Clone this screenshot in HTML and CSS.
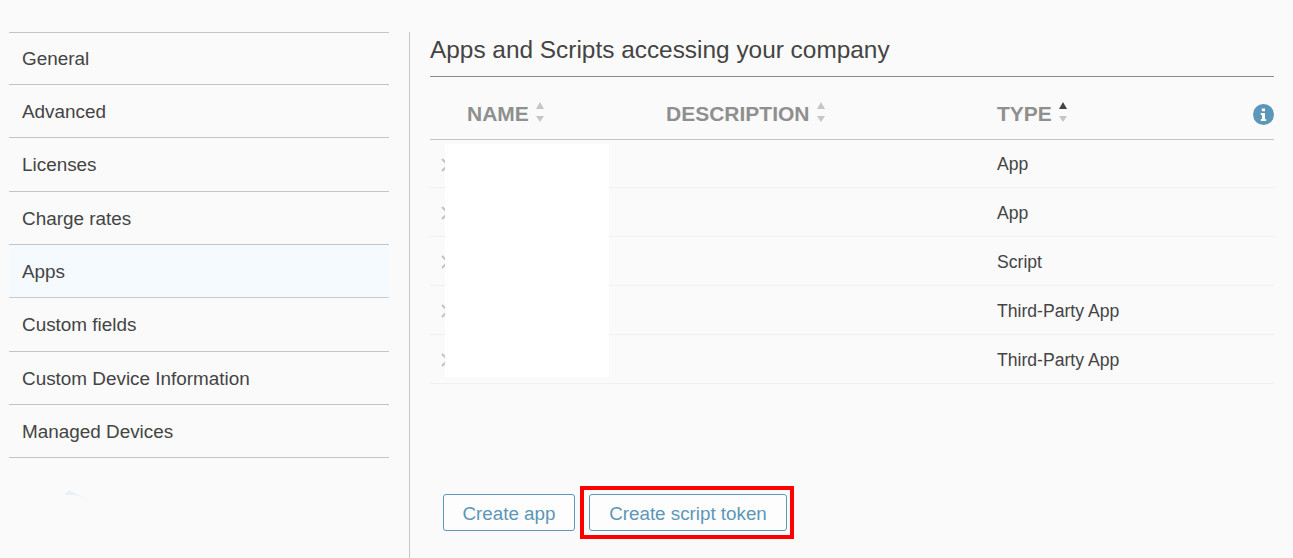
FILE: index.html
```html
<!DOCTYPE html>
<html lang="en">
<head>
<meta charset="utf-8">
<title>Apps</title>
<link rel="stylesheet" href="styles.css">
</head>
<body>
<div class="layout">
  <nav class="side">
    <a class="side-item">General</a>
    <a class="side-item">Advanced</a>
    <a class="side-item">Licenses</a>
    <a class="side-item">Charge rates</a>
    <a class="side-item active">Apps</a>
    <a class="side-item">Custom fields</a>
    <a class="side-item">Custom Device Information</a>
    <a class="side-item">Managed Devices</a>
  </nav>
  <main class="main">
    <h1 class="title">Apps and Scripts accessing your company</h1>
    <div class="table">
      <div class="row head">
        <div></div>
        <div class="th">NAME <svg class="sort" viewBox="0 0 8 20"><path class="off" d="M4 0 8 7H0z"/><path class="off" d="M0 14h8l-4 6z"/></svg></div>
        <div class="th">DESCRIPTION <svg class="sort" viewBox="0 0 8 20"><path class="off" d="M4 0 8 7H0z"/><path class="off" d="M0 14h8l-4 6z"/></svg></div>
        <div class="th">TYPE <svg class="sort" viewBox="0 0 8 20"><path class="on" d="M4 0 8 7H0z"/><path class="off" d="M0 14h8l-4 6z"/></svg></div>
        <svg class="info" viewBox="0 0 21 21"><circle cx="10.500" cy="10.500" r="10.500" fill="#5b97b8"/><path fill="#fff" d="M8.800 4.500h3.200v2.800H8.800zM7.800 9h4.200v6h1.200v2H7.800v-2H9v-4H7.800z"/></svg>
      </div>
      <div class="row first"><svg class="chev" viewBox="0 0 8 14"><path d="M1 1l6 6-6 6"/></svg><div></div><div></div><div>App</div></div>
      <div class="row"><svg class="chev" viewBox="0 0 8 14"><path d="M1 1l6 6-6 6"/></svg><div></div><div></div><div>App</div></div>
      <div class="row"><svg class="chev" viewBox="0 0 8 14"><path d="M1 1l6 6-6 6"/></svg><div></div><div></div><div>Script</div></div>
      <div class="row"><svg class="chev" viewBox="0 0 8 14"><path d="M1 1l6 6-6 6"/></svg><div></div><div></div><div>Third-Party App</div></div>
      <div class="row"><svg class="chev" viewBox="0 0 8 14"><path d="M1 1l6 6-6 6"/></svg><div></div><div></div><div>Third-Party App</div></div>
      <div class="redact"></div>
    </div>
    <div class="actions">
      <button class="btn">Create app</button>
      <div class="highlight"><button class="btn wide">Create script token</button></div>
    </div>
  </main>
</div>
<svg class="swoosh" viewBox="0 0 26 11"><path d="M0 5 5 0l21 11L12 5z"/></svg>
</body>
</html>
```
FILE: styles.css
```css
html, body { margin: 0; height: 100%; }
body {
  background: #fafafa;
  color: #444;
  font-family: "Liberation Sans", Arial, sans-serif;
  overflow: hidden;
  position: relative;
}
.layout { display: flex; height: 558px; padding: 32px 0 0 9px; box-sizing: border-box; }
.side { width: 380px; flex: none; align-self: flex-start; border-top: 1px solid #c4c4c4; }
.side-item {
  display: flex; align-items: center;
  height: 53.320px; box-sizing: border-box;
  padding: 2px 0 0 13px;
  border-bottom: 1px solid #c4c4c4;
  font-size: 18.900px; color: #444;
}
.side-item:first-child { height: 52px; padding-top: 1px; }
.side-item.active { background: #f5faff; border-bottom-color: #c6ccd4; }
.main {
  margin-left: 20px; padding-left: 20px; width: 844px; flex: none;
  border-left: 1px solid #c8c8c8;
  display: flex; flex-direction: column;
}
.title {
  margin: 0; height: 45px; box-sizing: border-box;
  font-size: 24.400px; font-weight: 400; line-height: 36px; color: #444;
  border-bottom: 1px solid #8a8a8a;
}
.table { position: relative; }
.row {
  display: grid; grid-template-columns: 37px 199px 331px 1fr;
  align-items: center;
  height: 49px; padding-top: 2px; box-sizing: border-box;
  border-bottom: 1px solid #eef0f3;
  font-size: 17.600px; color: #444;
}
.row.first { height: 48px; }
.row.head {
  height: 63px; padding-top: 12px;
  border-bottom: 1px solid #c4c4c4;
  grid-template-columns: 37px 199px 331px 1fr 21px;
}
.th { font-size: 21px; font-weight: 700; color: #8f8f8f; display: flex; align-items: center; gap: 7px; white-space: nowrap; }
.sort { width: 8px; height: 20px; margin-top: -4px; }
.off { fill: #c6c6c6; }
.on { fill: #444; }
.info { width: 21px; height: 21px; }
.chev { width: 8px; height: 14px; margin-left: 11px; }
.chev path { fill: none; stroke: #c2c2c2; stroke-width: 2; }
.redact { position: absolute; left: 15px; top: 67px; width: 164px; height: 233px; background: #fff; }
.actions { display: flex; align-items: center; margin-top: auto; margin-bottom: 19px; padding-left: 13px; gap: 5px; }
.btn {
  height: 37px; width: 132px; box-sizing: border-box;
  background: #fdfdfd; border: 1px solid #5b97b8; border-radius: 3px;
  color: #5b97b8; font: 18.800px "Liberation Sans", Arial, sans-serif; padding: 2px 0 0;
}
.btn.wide { width: 198px; }
.highlight { border: 4px solid #f00; padding: 4px 3px 4px 5px; display: flex; }
.swoosh { position: absolute; left: 64px; top: 490px; width: 26px; height: 11px; }
.swoosh path { fill: #e8f1fa; }
```
